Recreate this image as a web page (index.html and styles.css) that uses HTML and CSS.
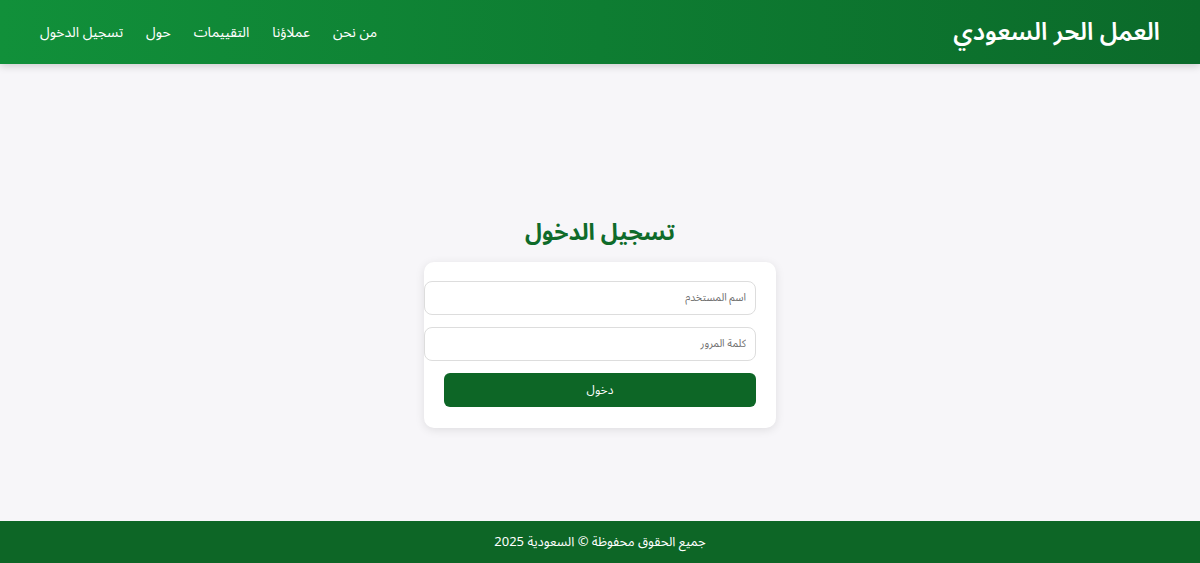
FILE: index.html
```html
<!DOCTYPE html>
<html lang="ar" dir="rtl">
<head>
<meta charset="UTF-8">
<meta name="viewport" content="width=device-width, initial-scale=1.0">
<title>العمل الحر السعودي - تسجيل الدخول</title>
<link rel="stylesheet" href="styles.css">
</head>
<body>
    <header class="navbar">
        <div class="brand">العمل الحر السعودي</div>
        <nav class="nav-links">
            <a href="#about">من نحن</a>
            <a href="#clients">عملاؤنا</a>
            <a href="#reviews">التقييمات</a>
            <a href="#info">حول</a>
            <a href="#login">تسجيل الدخول</a>
        </nav>
    </header>

    <main class="login" id="login">
        <h2 class="login-title">تسجيل الدخول</h2>
        <form class="login-card" id="login-form">
            <input type="text" class="field" placeholder="اسم المستخدم" required>
            <input type="password" class="field" placeholder="كلمة المرور" required>
            <button type="submit" class="login-btn">دخول</button>
        </form>
    </main>

    <footer class="footer">
        جميع الحقوق محفوظة &copy; السعودية 2025
    </footer>
    <script>
        document.getElementById('login-form').addEventListener('submit', function(event) {
            event.preventDefault();
        });
    </script>
</body>
</html>
```

FILE: styles.css
```css
body {
    margin: 0;
    min-height: 100vh;
    display: flex;
    flex-direction: column;
    background-color: #f7f6f9;
    font-family: "Noto Sans Arabic", "Noto Sans", "DejaVu Sans", sans-serif;
    color: #222;
}

.navbar {
    position: sticky;
    top: 0;
    z-index: 10;
    height: 64px;
    display: flex;
    justify-content: space-between;
    align-items: center;
    padding: 0 40px;
    background: linear-gradient(to left, #0b6a2a, #11903a);
    box-shadow: 0 2px 8px rgba(0, 0, 0, 0.18);
}

.brand {
    color: #fff;
    font-size: 24.5px;
    font-weight: 600;
}

.nav-links {
    display: flex;
    gap: 23px;
}

.nav-links a {
    color: #fff;
    text-decoration: none;
    font-size: 14px;
}

.nav-links a:hover {
    text-decoration: underline;
}

.login {
    flex: 1;
    padding: 150px 20px 93px;
    display: flex;
    flex-direction: column;
    align-items: center;
}

.login-title {
    margin: 0 0 10px;
    font-size: 23px;
    line-height: 38px;
    font-weight: bold;
    color: #0f6b2a;
}

.login-card {
    width: 312px;
    padding: 19px 20px 21px;
    background: #fff;
    border-radius: 10px;
    box-shadow: 0 2px 10px rgba(0, 0, 0, 0.1);
}

.field {
    display: block;
    width: 100%;
    margin-bottom: 12px;
    padding: 9px;
    font-family: inherit;
    font-size: 10.5px;
    line-height: 14px;
    border: 1px solid #ddd;
    border-radius: 8px;
    outline: none;
}

.field::placeholder {
    color: #6f6f6f;
}

.login-btn {
    display: block;
    width: 100%;
    height: 34px;
    border: none;
    border-radius: 6px;
    background-color: #0d6626;
    color: #fff;
    font-family: inherit;
    font-size: 12px;
    cursor: pointer;
}

.login-btn:hover {
    background-color: #0b5520;
}

.footer {
    background-color: #0d6626;
    color: #fff;
    text-align: center;
    padding: 10px 0;
    font-size: 13px;
    line-height: 22px;
}
```
